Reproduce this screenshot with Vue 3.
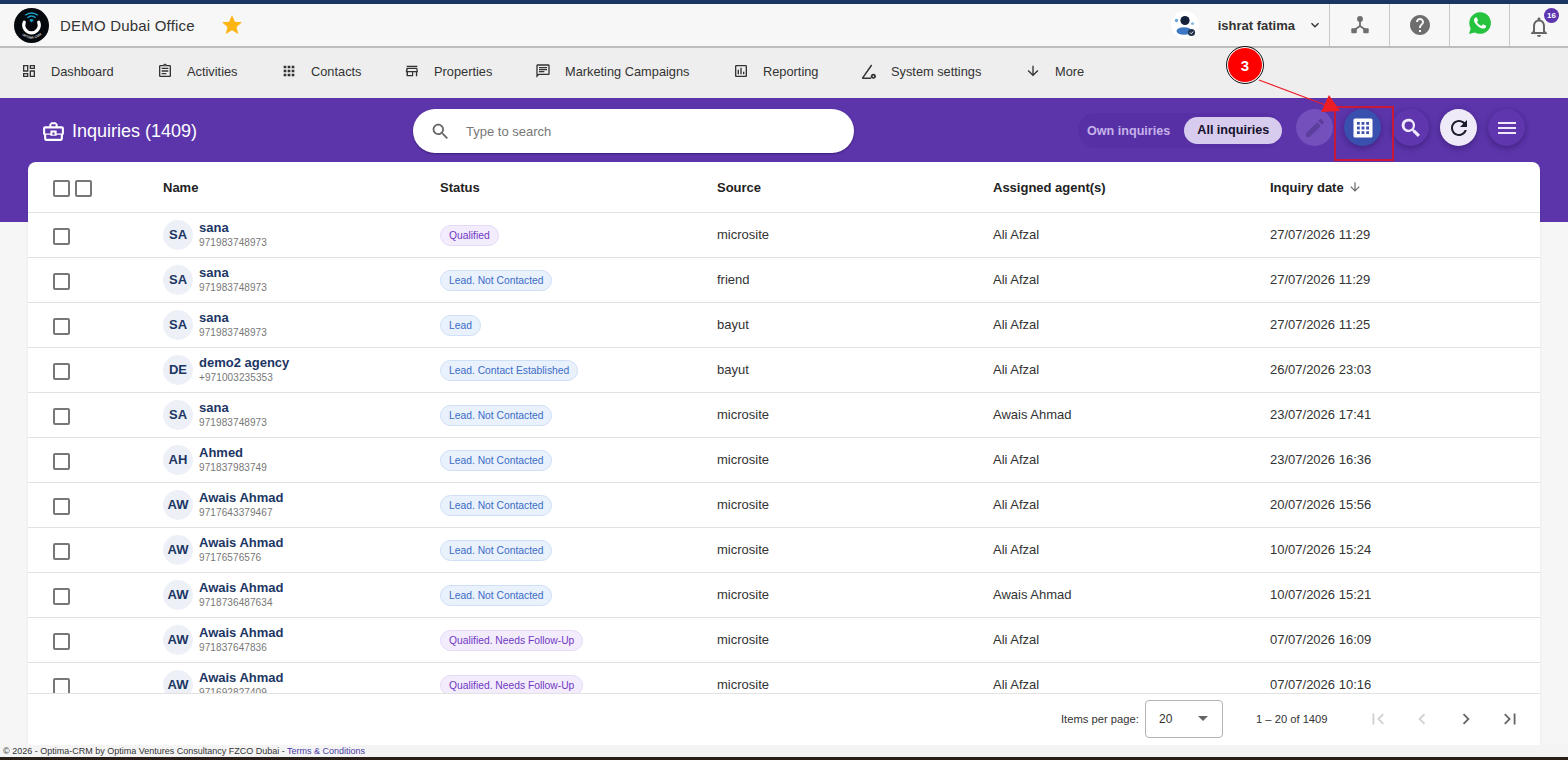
<template>
  <div class="page">
    <div class="topline"></div>

    <header class="header">
      <svg class="logo" viewBox="0 0 36 36">
        <circle cx="18" cy="18" r="18" fill="#05090d" />
        <path d="M10.6 14.5a8 8 0 1 0 14.8 0" fill="none" stroke="#fff" stroke-width="3.2" stroke-linecap="round" />
        <path d="M11.5 7.5a10 10 0 0 1 13 0M13.8 10a6.6 6.6 0 0 1 8.4 0" fill="none" stroke="#1c9fc9" stroke-width="1.4" />
        <path d="M15.6 12.4a3.4 3.4 0 0 1 4.8 0L18 15z" fill="#1c9fc9" />
        <path id="logoArc" d="M4.5 23a15 15 0 0 0 27 0" fill="none" />
        <text font-size="3.4" font-weight="700" fill="#cfd6da" font-family="Liberation Sans, sans-serif">
          <textPath href="#logoArc" startOffset="6">OPTIMA.COM</textPath>
        </text>
      </svg>
      <span class="office">DEMO Dubai Office</span>
      <svg class="star" viewBox="0 0 24 24"><path :d="icons.star" /></svg>

      <div class="header-right">
        <div class="user">
          <svg class="user-pic" viewBox="0 0 28 28">
            <circle cx="14" cy="14" r="14" fill="#fff" />
            <circle cx="14" cy="9.5" r="4.6" fill="#14213a" />
            <ellipse cx="13" cy="20" rx="7.5" ry="3.8" fill="#3d78c4" />
            <circle cx="5.5" cy="9.5" r="1.7" fill="#6aa5dc" />
            <circle cx="21.5" cy="12.5" r="1.6" fill="#8fbbe4" />
            <circle cx="20.5" cy="21.5" r="3.6" fill="#24344e" />
            <path d="M18.9 21.5l1.3 1.3 2-2.2" fill="none" stroke="#fff" stroke-width="0.9" />
          </svg>
          <span class="user-name">ishrat fatima</span>
          <svg class="user-caret" viewBox="0 0 12 12"><path d="M2.5 4.2 6 7.7l3.5-3.5" fill="none" stroke="#333" stroke-width="1.4" /></svg>
        </div>
        <div class="head-cell">
          <svg class="hub" viewBox="0 0 24 24">
            <path d="M12 7v6l-7 5M12 13l7 5" fill="none" stroke="#6e6e6e" stroke-width="2" />
            <circle cx="12" cy="5.5" r="3.2" fill="#6e6e6e" />
            <rect x="2.5" y="15.5" width="6" height="5.5" rx="1" fill="#6e6e6e" />
            <rect x="15.5" y="15.5" width="6" height="5.5" rx="1" fill="#6e6e6e" />
          </svg>
        </div>
        <div class="head-cell">
          <svg class="help" viewBox="0 0 24 24"><path :d="icons.help" /></svg>
        </div>
        <div class="head-cell wa-cell">
          <svg class="wa" viewBox="0 0 24 24">
            <path d="M12 1.2a10.8 10.8 0 0 0-9.3 16.2L1 23l5.8-1.6A10.8 10.8 0 1 0 12 1.2z" fill="#25c33e" />
            <path :d="icons.phone" fill="#fff" />
          </svg>
        </div>
        <div class="head-cell bell-cell">
          <svg class="bell" viewBox="0 0 24 24"><path :d="icons.bell" /></svg>
          <span class="bell-count">16</span>
        </div>
      </div>
    </header>

    <nav class="nav">
      <div class="nav-item" v-for="item in navItems" :key="item.label" :style="{ width: item.width + 'px' }">
        <svg class="nav-icon" viewBox="0 0 24 24">
          <path v-if="item.icon" :d="icons[item.icon]" />
          <g v-else>
            <path d="M2 23 16 3M2 23h13" fill="none" stroke="#333" stroke-width="2.2" />
            <circle cx="18.5" cy="20" r="3.8" fill="#333" />
            <circle cx="18.5" cy="20" r="1.2" fill="#eee" />
          </g>
        </svg>
        <span>{{ item.label }}</span>
      </div>
    </nav>

    <section class="hero">
      <div class="title">
        <svg class="title-icon" viewBox="0 0 24 24"><path :d="icons.case" /></svg>
        <span>Inquiries (1409)</span>
      </div>
      <div class="searchbox">
        <svg class="search-icon" viewBox="0 0 24 24"><path :d="icons.search" /></svg>
        <span>Type to search</span>
      </div>
      <div class="hero-right">
        <div class="scope">
          <span class="scope-off">Own inquiries</span>
          <span class="scope-on">All inquiries</span>
        </div>
        <div class="tools">
          <button class="tool tool-edit"><svg viewBox="0 0 24 24"><path :d="icons.edit" /></svg></button>
          <button class="tool tool-grid"><svg viewBox="0 0 24 24"><path fill-rule="evenodd" :d="icons.grid" /></svg></button>
          <button class="tool"><svg viewBox="0 0 24 24"><path :d="icons.searchBold" /></svg></button>
          <button class="tool tool-light"><svg viewBox="0 0 24 24"><path :d="icons.refresh" /></svg></button>
          <button class="tool"><svg viewBox="0 0 24 24"><path :d="icons.menu" /></svg></button>
        </div>
      </div>
    </section>

    <main class="content">
      <div class="card">
        <div class="row head-row">
          <div class="check-cell"><i class="box"></i><i class="box"></i></div>
          <div>Name</div>
          <div>Status</div>
          <div>Source</div>
          <div>Assigned agent(s)</div>
          <div class="date-head">
            Inquiry date
            <svg viewBox="0 0 24 24"><path :d="icons.down" /></svg>
          </div>
        </div>

        <div class="rows">
          <div class="row" v-for="(r, i) in inquiries" :key="i">
            <div class="check-cell"><i class="box"></i></div>
            <div class="person">
              <span class="avatar">{{ r.name.slice(0, 2).toUpperCase() }}</span>
              <div class="person-text">
                <div class="person-name">{{ r.name }}</div>
                <div class="person-phone">{{ r.phone }}</div>
              </div>
            </div>
            <div><span class="status" :class="r.status.startsWith('Qualified') ? 'purple' : 'blue'">{{ r.status }}</span></div>
            <div class="cell">{{ r.source }}</div>
            <div class="cell">{{ r.agent }}</div>
            <div class="cell">{{ r.date }}</div>
          </div>
        </div>

        <div class="pager">
          <span class="pager-label">Items per page:</span>
          <div class="pager-select">
            <span>20</span>
            <i class="caret"></i>
          </div>
          <span class="pager-range">1 – 20 of 1409</span>
          <div class="pager-btns">
            <svg class="off" viewBox="0 0 24 24"><path :d="icons.first" /></svg>
            <svg class="off" viewBox="0 0 24 24"><path :d="icons.prev" /></svg>
            <svg viewBox="0 0 24 24"><path :d="icons.next" /></svg>
            <svg viewBox="0 0 24 24"><path :d="icons.last" /></svg>
          </div>
        </div>
      </div>
    </main>

    <footer class="footer">
      © 2026 - Optima-CRM by Optima Ventures Consultancy FZCO Dubai - <a>Terms &amp; Conditions</a>
    </footer>
    <div class="strip"></div>

    <!-- screenshot annotation drawn on top of the page -->
    <div class="mark-box"></div>
    <svg class="mark-arrow" viewBox="0 0 100 50">
      <path d="M1 1 70 27" stroke="#ee1c25" stroke-width="1.2" fill="none" />
      <path d="M82 32 71 16 63 33z" fill="#ee1c25" />
    </svg>
    <div class="mark-num">3</div>
  </div>
</template>

<script setup>
const icons = {
  star: "M12 17.27L18.18 21l-1.64-7.03L22 9.24l-7.19-.61L12 2 9.19 8.63 2 9.24l5.46 4.73L5.82 21z",
  help: "M12 2C6.48 2 2 6.48 2 12s4.48 10 10 10 10-4.48 10-10S17.52 2 12 2zm1 17h-2v-2h2v2zm2.07-7.75l-.9.92C13.45 12.9 13 13.5 13 15h-2v-.5c0-1.1.45-2.1 1.17-2.83l1.24-1.26c.37-.36.59-.86.59-1.41 0-1.1-.9-2-2-2s-2 .9-2 2H8c0-2.21 1.79-4 4-4s4 1.79 4 4c0 .88-.36 1.68-.93 2.25z",
  phone: "M17.47 14.38c-.3-.15-1.76-.87-2.03-.97-.27-.1-.47-.15-.67.15-.2.3-.77.97-.94 1.17-.17.2-.35.22-.64.07-.3-.15-1.26-.46-2.4-1.48-.89-.79-1.49-1.77-1.66-2.07-.17-.3-.02-.46.13-.61.13-.13.3-.35.45-.52.15-.17.2-.3.3-.5.1-.2.05-.37-.02-.52-.07-.15-.67-1.61-.92-2.21-.24-.58-.49-.5-.67-.51h-.57c-.2 0-.52.07-.79.37-.27.3-1.04 1.02-1.04 2.48s1.07 2.88 1.22 3.08c.15.2 2.1 3.2 5.08 4.49.71.31 1.26.49 1.69.63.71.23 1.36.19 1.87.12.57-.09 1.76-.72 2.01-1.41.25-.7.25-1.29.17-1.41-.07-.12-.27-.2-.57-.35z",
  bell: "M12 22c1.1 0 2-.9 2-2h-4c0 1.1.9 2 2 2zm6-6v-5c0-3.07-1.63-5.64-4.5-6.32V4c0-.83-.67-1.5-1.5-1.5s-1.5.67-1.5 1.5v.68C7.64 5.36 6 7.92 6 11v5l-2 2v1h16v-1l-2-2zm-2 1H8v-6c0-2.48 1.51-4.5 4-4.5s4 2.02 4 4.5v6z",
  dashboard: "M19 5v2h-4V5h4M9 5v6H5V5h4m10 8v6h-4v-6h4M9 17v2H5v-2h4M21 3h-8v6h8V3zM11 3H3v10h8V3zm10 8h-8v10h8V11zm-10 4H3v6h8v-6z",
  clipboard: "M7 15h7v2H7zm0-4h10v2H7zm0-4h10v2H7zm12-4h-4.18C14.4 1.84 13.3 1 12 1c-1.3 0-2.4.84-2.82 2H5c-.14 0-.27.01-.4.04-.39.08-.74.28-1.01.55-.18.18-.33.4-.43.64-.1.23-.16.49-.16.77v14c0 .27.06.54.16.78s.25.45.43.64c.27.27.62.47 1.01.55.13.02.26.03.4.03h14c1.1 0 2-.9 2-2V5c0-1.1-.9-2-2-2zm-7-.25c.41 0 .75.34.75.75s-.34.75-.75.75-.75-.34-.75-.75.34-.75.75-.75zM19 19H5V5h14v14z",
  apps: "M4 8h4V4H4v4zm6 12h4v-4h-4v4zm-6 0h4v-4H4v4zm0-6h4v-4H4v4zm6 0h4v-4h-4v4zm6-10v4h4V4h-4zm-6 4h4V4h-4v4zm6 6h4v-4h-4v4zm0 6h4v-4h-4v4z",
  store: "M18.36 9l.6 3H5.04l.6-3h12.72M20 4H4v2h16V4zm.2 3H3.8L2.8 12v2h1v6h10v-6h4v6h2v-6h1v-2l-1-5zM6 18v-4h6v4H6z",
  chat: "M20 2H4c-1.1 0-2 .9-2 2v18l4-4h14c1.1 0 2-.9 2-2V4c0-1.1-.9-2-2-2zm0 14H5.17L4 17.17V4h16v12zM6 12h8v2H6zm0-3h12v2H6zm0-3h12v2H6z",
  report: "M19 3H5c-1.1 0-2 .9-2 2v14c0 1.1.9 2 2 2h14c1.1 0 2-.9 2-2V5c0-1.1-.9-2-2-2zm0 16H5V5h14v14zM7 10h2v7H7zm4-3h2v10h-2zm4 6h2v4h-2z",
  down: "M20 12l-1.41-1.41L13 16.17V4h-2v12.17l-5.58-5.59L4 12l8 8 8-8z",
  case: "M20 7h-4V5l-2-2h-4L8 5v2H4c-1.1 0-2 .9-2 2v5c0 .75.4 1.38 1 1.73V19c0 1.11.89 2 2 2h14c1.11 0 2-.89 2-2v-3.28c.59-.35 1-.99 1-1.72V9c0-1.1-.9-2-2-2zM10 5h4v2h-4V5zM4 9h16v5h-5v-3H9v3H4V9zm9 6h-2v-2h2v2zm6 4H5v-4h4v1h6v-1h4v4z",
  search: "M15.5 14h-.79l-.28-.27C15.41 12.59 16 11.11 16 9.5 16 5.91 13.09 3 9.5 3S3 5.91 3 9.5 5.91 16 9.5 16c1.61 0 3.09-.59 4.23-1.57l.27.28v.79l5 4.99L20.49 19l-4.99-5zm-6 0C7.01 14 5 11.99 5 9.5S7.01 5 9.5 5 14 7.01 14 9.5 11.99 14 9.5 14z",
  searchBold: "M15.9 13.7h-.9l-.3-.3a6.7 6.7 0 1 0-1.3 1.3l.3.3v.9l5.1 5.1 2.2-2.2-5.1-5.1zm-6.2 0a4.1 4.1 0 1 1 0-8.2 4.1 4.1 0 0 1 0 8.2z",
  edit: "M3 17.25V21h3.75L17.81 9.94l-3.75-3.75L3 17.25zM20.71 7.04c.39-.39.39-1.02 0-1.41l-2.34-2.34c-.39-.39-1.02-.39-1.41 0l-1.83 1.83 3.75 3.75 1.83-1.83z",
  grid: "M4 2.5h16A1.5 1.5 0 0 1 21.5 4v16a1.5 1.5 0 0 1-1.5 1.5H4A1.5 1.5 0 0 1 2.5 20V4A1.5 1.5 0 0 1 4 2.5zM6 6v2.8h2.8V6zm4.6 0v2.8h2.8V6zm4.6 0v2.8H18V6zM6 10.6v2.8h2.8v-2.8zm4.6 0v2.8h2.8v-2.8zm4.6 0v2.8H18v-2.8zM6 15.2V18h2.8v-2.8zm4.6 0V18h2.8v-2.8zm4.6 0V18H18v-2.8z",
  refresh: "M17.65 6.35C16.2 4.9 14.21 4 12 4c-4.42 0-7.99 3.58-7.99 8s3.57 8 7.99 8c3.73 0 6.84-2.55 7.73-6h-2.08c-.82 2.33-3.04 4-5.65 4-3.31 0-6-2.69-6-6s2.69-6 6-6c1.66 0 3.14.69 4.22 1.78L13 11h7V4l-2.35 2.35z",
  menu: "M3 18h18v-2H3v2zm0-5h18v-2H3v2zm0-7v2h18V6H3z",
  first: "M18.41 16.59L13.82 12l4.59-4.59L17 6l-6 6 6 6zM6 6h2v12H6z",
  prev: "M15.41 7.41L14 6l-6 6 6 6 1.41-1.41L10.83 12z",
  next: "M10 6L8.59 7.41 13.17 12l-4.58 4.59L10 18l6-6z",
  last: "M5.59 7.41L10.18 12l-4.59 4.59L7 18l6-6-6-6zM16 6h2v12h-2z",
};

const navItems = [
  { label: "Dashboard", icon: "dashboard", width: 136 },
  { label: "Activities", icon: "clipboard", width: 124 },
  { label: "Contacts", icon: "apps", width: 123 },
  { label: "Properties", icon: "store", width: 131 },
  { label: "Marketing Campaigns", icon: "chat", width: 198 },
  { label: "Reporting", icon: "report", width: 128 },
  { label: "System settings", icon: "", width: 164 },
  { label: "More", icon: "down", width: 80 },
];

const inquiries = [
  { name: "sana", phone: "971983748973", status: "Qualified", source: "microsite", agent: "Ali Afzal", date: "27/07/2026 11:29" },
  { name: "sana", phone: "971983748973", status: "Lead. Not Contacted", source: "friend", agent: "Ali Afzal", date: "27/07/2026 11:29" },
  { name: "sana", phone: "971983748973", status: "Lead", source: "bayut", agent: "Ali Afzal", date: "27/07/2026 11:25" },
  { name: "demo2 agency", phone: "+971003235353", status: "Lead. Contact Established", source: "bayut", agent: "Ali Afzal", date: "26/07/2026 23:03" },
  { name: "sana", phone: "971983748973", status: "Lead. Not Contacted", source: "microsite", agent: "Awais Ahmad", date: "23/07/2026 17:41" },
  { name: "Ahmed", phone: "971837983749", status: "Lead. Not Contacted", source: "microsite", agent: "Ali Afzal", date: "23/07/2026 16:36" },
  { name: "Awais Ahmad", phone: "9717643379467", status: "Lead. Not Contacted", source: "microsite", agent: "Ali Afzal", date: "20/07/2026 15:56" },
  { name: "Awais Ahmad", phone: "97176576576", status: "Lead. Not Contacted", source: "microsite", agent: "Ali Afzal", date: "10/07/2026 15:24" },
  { name: "Awais Ahmad", phone: "9718736487634", status: "Lead. Not Contacted", source: "microsite", agent: "Awais Ahmad", date: "10/07/2026 15:21" },
  { name: "Awais Ahmad", phone: "971837647836", status: "Qualified. Needs Follow-Up", source: "microsite", agent: "Ali Afzal", date: "07/07/2026 16:09" },
  { name: "Awais Ahmad", phone: "971692827409", status: "Qualified. Needs Follow-Up", source: "microsite", agent: "Ali Afzal", date: "07/07/2026 10:16" },
];
</script>

<style>
html,
body {
  margin: 0;
  overflow: hidden;
}
</style>

<style scoped>
.page {
  position: relative;
  width: 1568px;
  height: 760px;
  overflow: hidden;
  display: flex;
  flex-direction: column;
  background: #f6f6f6;
  font-family: "Liberation Sans", Arial, sans-serif;
  color: #333;
}
.topline {
  height: 4px;
  background: #1c3664;
}
.header {
  height: 42px;
  box-sizing: content-box;
  display: flex;
  align-items: center;
  padding-left: 14px;
  background: #f7f7f7;
  border-bottom: 2px solid #bdbdbd;
}
.logo {
  width: 35px;
  height: 35px;
}
.office {
  margin-left: 11px;
  font-size: 15px;
  letter-spacing: 0.2px;
  color: #333;
}
.star {
  width: 24px;
  height: 24px;
  margin-left: 25px;
  fill: #fdb515;
}
.header-right {
  margin-left: auto;
  display: flex;
  height: 100%;
}
.user {
  display: flex;
  align-items: center;
}
.user-pic {
  width: 28px;
  height: 28px;
}
.user-name {
  margin-left: 19px;
  font-size: 13px;
  font-weight: 700;
  color: #333;
}
.user-caret {
  width: 12px;
  height: 12px;
  margin: 0 8px 0 14px;
}
.head-cell {
  width: 59px;
  border-left: 1px solid #c9c9c9;
  display: flex;
  align-items: center;
  justify-content: center;
  position: relative;
}
.bell-cell {
  width: 58px;
}
.hub {
  width: 22px;
  height: 22px;
}
.help {
  width: 24px;
  height: 24px;
  fill: #6e6e6e;
}
.wa {
  width: 24px;
  height: 24px;
  margin-top: -5px;
}
.bell {
  width: 24px;
  height: 24px;
  fill: #666;
  margin-top: 3px;
}
.bell-count {
  position: absolute;
  top: 4px;
  left: 34px;
  width: 15px;
  height: 15px;
  border-radius: 50%;
  background: #5e35b1;
  color: #fff;
  font-size: 8px;
  font-weight: 700;
  line-height: 15px;
  text-align: center;
}
.nav {
  height: 50px;
  box-sizing: border-box;
  padding: 0 0 4px 21px;
  display: flex;
  align-items: center;
  background: #eeeeee;
}
.nav-item {
  display: flex;
  align-items: center;
  gap: 14px;
  flex: none;
  font-size: 12.8px;
  color: #333;
}
.nav-icon {
  width: 16px;
  height: 16px;
  fill: #333;
}
.hero {
  height: 124px;
  flex: none;
  box-sizing: border-box;
  padding: 11px 28px 0 41px;
  display: flex;
  align-items: flex-start;
  background: #5c35ab;
}
.title {
  width: 372px;
  height: 44px;
  display: flex;
  align-items: center;
  gap: 6px;
  color: #fff;
  font-size: 18px;
}
.title-icon {
  width: 25px;
  height: 25px;
  fill: #fff;
}
.searchbox {
  width: 441px;
  height: 44px;
  display: flex;
  align-items: center;
  border-radius: 22px;
  background: #fff;
  box-shadow: 0 1px 2px rgba(30, 10, 70, 0.5);
  color: #777;
  font-size: 13px;
}
.search-icon {
  width: 21px;
  height: 21px;
  margin: 0 15px 0 17px;
  fill: #666;
}
.hero-right {
  flex: 1;
  display: flex;
  align-items: flex-start;
  height: 46px;
  margin-left: 224px;
}
.scope {
  height: 35px;
  margin-top: 4px;
  display: flex;
  align-items: center;
  width: 204px;
  box-sizing: border-box;
  padding: 0 0 0 9px;
  border-radius: 18px;
  background: #5830a5;
  font-size: 12.6px;
  font-weight: 700;
  flex: none;
}
.scope-off {
  color: #c5b3ea;
  margin-right: 14px;
  white-space: nowrap;
}
.scope-on {
  height: 27px;
  line-height: 27px;
  padding: 0 13px;
  border-radius: 14px;
  background: #d7cbee;
  color: #16112a;
  white-space: nowrap;
}
.tools {
  display: flex;
  gap: 11px;
  margin-left: 14px;
  flex: none;
}
.tool {
  width: 37px;
  height: 37px;
  padding: 0;
  border: 0;
  border-radius: 50%;
  background: #5f36ad;
  box-shadow: 0 2px 6px rgba(30, 10, 70, 0.45);
  display: flex;
  align-items: center;
  justify-content: center;
  fill: #efe9fb;
}
.tool svg {
  width: 24px;
  height: 24px;
}
.tool-edit {
  background: #7350bb;
  box-shadow: none;
  fill: #5c3f9c;
}
.tool-grid {
  background: #3a50ae;
  fill: #fff;
}
.tool-light {
  background: #efeaf8;
  fill: #1d1d2b;
}
.content {
  flex: 1;
  min-height: 0;
  padding: 0 28px;
  margin-top: -60px;
}
.card {
  height: 100%;
  background: #fff;
  border-radius: 8px 8px 0 0;
  box-shadow: 0 1px 3px rgba(0, 0, 0, 0.08);
  display: flex;
  flex-direction: column;
}
.row {
  flex: none;
  height: 45px;
  box-sizing: border-box;
  display: grid;
  grid-template-columns: 135px 277px 277px 276px 277px 1fr;
  align-items: center;
  border-bottom: 1px solid #e2e2e2;
  font-size: 13px;
  color: #333;
}
.head-row {
  height: 51px;
  font-weight: 700;
  color: #222;
}
.check-cell {
  display: flex;
  gap: 5px;
  padding: 2px 0 0 25px;
}
.cell {
  margin-top: -2px;
}
.box {
  width: 17px;
  height: 17px;
  box-sizing: border-box;
  border: 2px solid #777;
  border-radius: 2px;
  background: #fff;
}
.date-head {
  display: flex;
  align-items: center;
  gap: 4px;
}
.date-head svg {
  width: 14px;
  height: 14px;
  fill: #666;
}
.rows {
  height: 480px;
  overflow: hidden;
  flex: none;
}
.person {
  display: flex;
  align-items: center;
  gap: 6px;
}
.person-text {
  padding-top: 2px;
}
.avatar {
  width: 30px;
  height: 30px;
  flex: none;
  border-radius: 50%;
  background: #edf1f7;
  color: #1c3664;
  font-size: 13px;
  font-weight: 700;
  line-height: 30px;
  text-align: center;
}
.person-name {
  font-size: 13px;
  font-weight: 700;
  line-height: 15px;
  margin-top: -2px;
  color: #1c3664;
}
.person-phone {
  font-size: 10px;
  line-height: 15px;
  letter-spacing: 0.1px;
  color: #777;
}
.status {
  display: inline-block;
  height: 21px;
  line-height: 19px;
  box-sizing: border-box;
  padding: 0 8px;
  border-radius: 11px;
  border: 1px solid;
  font-size: 10.3px;
}
.purple {
  background: #f2ecfc;
  border-color: #e4daf7;
  color: #7138c4;
}
.blue {
  background: #e9f1fc;
  border-color: #cfdff6;
  color: #3b6cc6;
}
.pager {
  height: 52px;
  flex: none;
  position: relative;
  display: flex;
  align-items: center;
  border-top: 1px solid #e2e2e2;
  box-sizing: border-box;
  padding: 0 0 2px 1033px;
  font-size: 11.2px;
  color: #333;
}
.pager-label {
  width: 84px;
  white-space: nowrap;
}
.pager-select {
  width: 78px;
  height: 38px;
  box-sizing: border-box;
  border: 1px solid #b3b3b3;
  border-radius: 4px;
  display: flex;
  align-items: center;
  justify-content: space-between;
  padding: 0 14px 0 13px;
  font-size: 12px;
}
.caret {
  border-left: 5px solid transparent;
  border-right: 5px solid transparent;
  border-top: 5px solid #666;
}
.pager-range {
  margin-left: 33px;
  width: 111px;
  white-space: nowrap;
}
.pager-btns {
  display: flex;
  gap: 22px;
  fill: #666;
}
.pager-btns svg {
  width: 22px;
  height: 22px;
}
.pager-btns .off {
  fill: #d0d0d0;
}
.footer {
  height: 12px;
  flex: none;
  padding-left: 3px;
  background: #f4f4f4;
  font-size: 9px;
  line-height: 12px;
  color: #333;
}
.footer a {
  color: #4b3aa8;
}
.strip {
  height: 3px;
  flex: none;
  background: #2a1f18;
}
.mark-box {
  position: absolute;
  left: 1334px;
  top: 106px;
  width: 60px;
  height: 55px;
  box-sizing: border-box;
  border: 2px solid #c8183a;
}
.mark-arrow {
  position: absolute;
  left: 1258px;
  top: 79px;
  width: 100px;
  height: 50px;
}
.mark-num {
  position: absolute;
  left: 1227px;
  top: 47px;
  width: 36px;
  height: 36px;
  box-sizing: border-box;
  border-radius: 50%;
  background: #f00;
  border: 1px solid #fff;
  outline: 1px solid #111;
  color: #fff;
  font-size: 15px;
  font-weight: 700;
  line-height: 35px;
  text-align: center;
}
</style>
